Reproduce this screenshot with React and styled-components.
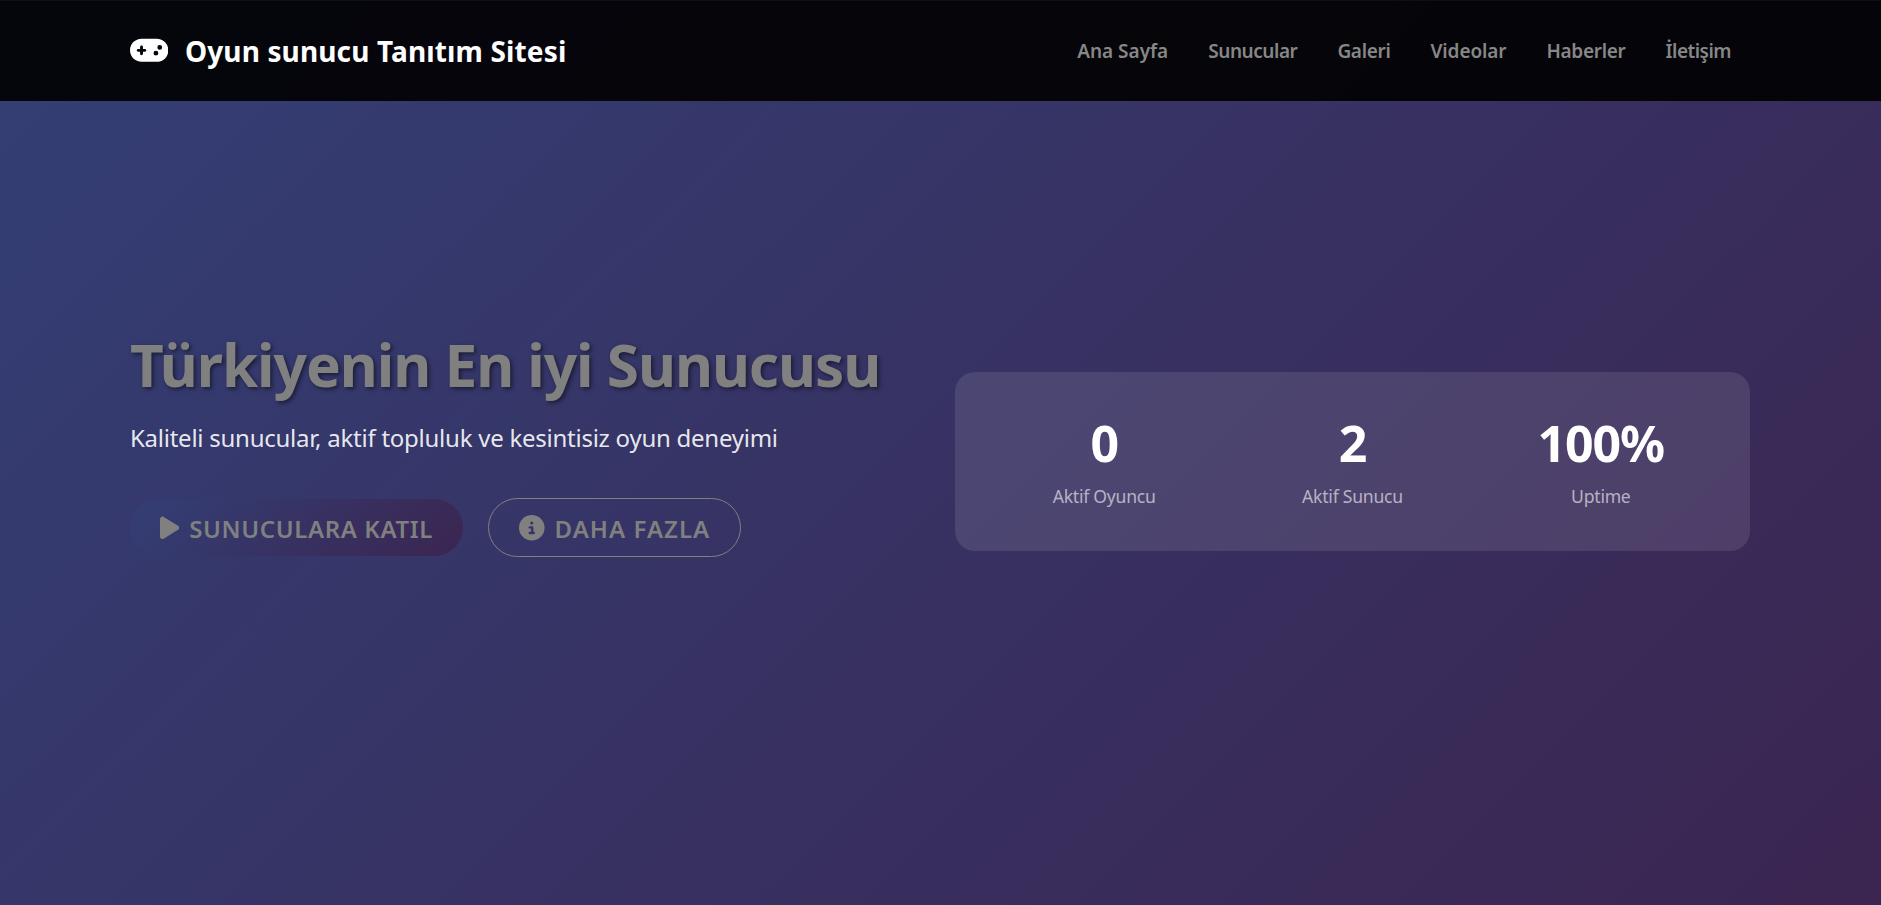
import React from "react";
import styled, { createGlobalStyle } from "styled-components";
import { FaGamepad, FaPlay, FaCircleInfo } from "react-icons/fa6";

const GlobalStyle = createGlobalStyle`
  *, *::before, *::after { box-sizing: border-box; }
  html, body { margin: 0; padding: 0; }
  body {
    font-family: "Noto Sans", "Open Sans", sans-serif;
    color: #fff;
    overflow: hidden;
  }
  h1, p { margin: 0; }
`;

const Page = styled.div`
  display: flex;
  flex-direction: column;
  height: 905px;
  background: linear-gradient(135deg, #333f75 0%, #3b2551 100%);
`;

const Header = styled.header`
  flex: none;
  height: 101px;
  display: flex;
  justify-content: center;
  padding-right: 1px;
  background: rgba(0, 0, 0, 0.9);
  box-shadow: inset 0 1px 0 rgba(255, 255, 255, 0.04);
`;

const HeaderInner = styled.div`
  width: 1620px;
  display: flex;
  align-items: center;
  justify-content: space-between;
`;

const Brand = styled.a`
  display: flex;
  align-items: center;
  gap: 16.5px;
  font-size: 28px;
  font-weight: 700;
  letter-spacing: 0.14px;
  line-height: 40px;

  svg {
    width: 38.4px;
    height: 30.7px;
  }
`;

const BrandName = styled.span`
  padding-top: 1px;
`;

const Nav = styled.nav`
  display: flex;
  margin-right: -1px;
`;

const NavLink = styled.a`
  padding: 0 20px;
  font-size: 19px;
  font-weight: 600;
  line-height: 30px;
  letter-spacing: ${(p) => p.$tracking}px;
  color: #878787;
`;

const Hero = styled.main`
  flex: 1;
  display: flex;
  align-items: center;
  justify-content: center;
  padding: 0 1px 83px 0;
`;

const HeroInner = styled.div`
  width: 1620px;
  display: grid;
  grid-template-columns: 1fr 1fr;
  gap: 30px;
  align-items: center;
`;

const Intro = styled.section`
  padding-bottom: 38px;
`;

const Title = styled.h1`
  font-size: 58.5px;
  font-weight: 700;
  line-height: 72px;
  letter-spacing: -1.04px;
  white-space: nowrap;
  color: #808080;
  text-shadow: 2px 2px 4px rgba(0, 0, 0, 0.5);
`;

const Lead = styled.p`
  margin-top: 20px;
  font-size: 24px;
  line-height: 36px;
  letter-spacing: -0.25px;
  white-space: nowrap;
  color: rgba(255, 255, 255, 0.9);
`;

const Actions = styled.div`
  display: flex;
  align-items: center;
  gap: 25px;
  margin-top: 42px;
`;

const Button = styled.a`
  display: flex;
  align-items: center;
  gap: 10px;
  width: ${(p) => (p.$outline ? 253 : 333)}px;
  height: ${(p) => (p.$outline ? 59 : 57)}px;
  padding: 1px 0 0 30px;
  border-radius: 30px;
  border: ${(p) => (p.$outline ? "1px solid #808080" : "none")};
  background: ${(p) =>
    p.$outline ? "transparent" : "linear-gradient(135deg, #333f75 0%, #3b2551 100%)"};
  font-size: 24px;
  font-weight: 600;
  letter-spacing: ${(p) => (p.$outline ? 1.03 : 0.61)}px;
  white-space: nowrap;
  color: #808080;

  svg {
    flex: none;
    width: ${(p) => (p.$outline ? 25.6 : 19.2)}px;
    height: 25.6px;
  }
`;

const StatsCard = styled.section`
  display: grid;
  grid-template-columns: repeat(3, 1fr);
  height: 179px;
  padding: 41px 25px 0;
  border-radius: 20px;
  background: rgba(255, 255, 255, 0.1);
`;

const Stat = styled.div`
  display: flex;
  flex-direction: column;
  align-items: center;
  gap: 10px;
`;

const StatValue = styled.div`
  font-size: 50px;
  font-weight: 700;
  line-height: 60px;
  letter-spacing: -1.1px;
`;

const StatLabel = styled.div`
  font-size: 17.6px;
  line-height: 26px;
  letter-spacing: -0.25px;
  color: rgba(255, 255, 255, 0.6);
`;

const links = [
  { label: "Ana Sayfa", tracking: 0 },
  { label: "Sunucular", tracking: -0.45 },
  { label: "Galeri", tracking: -0.33 },
  { label: "Videolar", tracking: -0.1 },
  { label: "Haberler", tracking: -0.3 },
  { label: "İletişim", tracking: -0.52 },
];

const stats = [
  { value: "0", label: "Aktif Oyuncu" },
  { value: "2", label: "Aktif Sunucu" },
  { value: "100%", label: "Uptime" },
];

export default function App() {
  return (
    <Page lang="tr">
      <GlobalStyle />
      <Header>
        <HeaderInner>
          <Brand>
            <FaGamepad />
            <BrandName>Oyun sunucu Tanıtım Sitesi</BrandName>
          </Brand>
          <Nav>
            {links.map((link) => (
              <NavLink key={link.label} $tracking={link.tracking}>
                {link.label}
              </NavLink>
            ))}
          </Nav>
        </HeaderInner>
      </Header>
      <Hero>
        <HeroInner>
          <Intro>
            <Title>Türkiyenin En iyi Sunucusu</Title>
            <Lead>Kaliteli sunucular, aktif topluluk ve kesintisiz oyun deneyimi</Lead>
            <Actions>
              <Button>
                <FaPlay />
                SUNUCULARA KATIL
              </Button>
              <Button $outline>
                <FaCircleInfo />
                DAHA FAZLA
              </Button>
            </Actions>
          </Intro>
          <StatsCard>
            {stats.map((stat) => (
              <Stat key={stat.label}>
                <StatValue>{stat.value}</StatValue>
                <StatLabel>{stat.label}</StatLabel>
              </Stat>
            ))}
          </StatsCard>
        </HeroInner>
      </Hero>
    </Page>
  );
}
